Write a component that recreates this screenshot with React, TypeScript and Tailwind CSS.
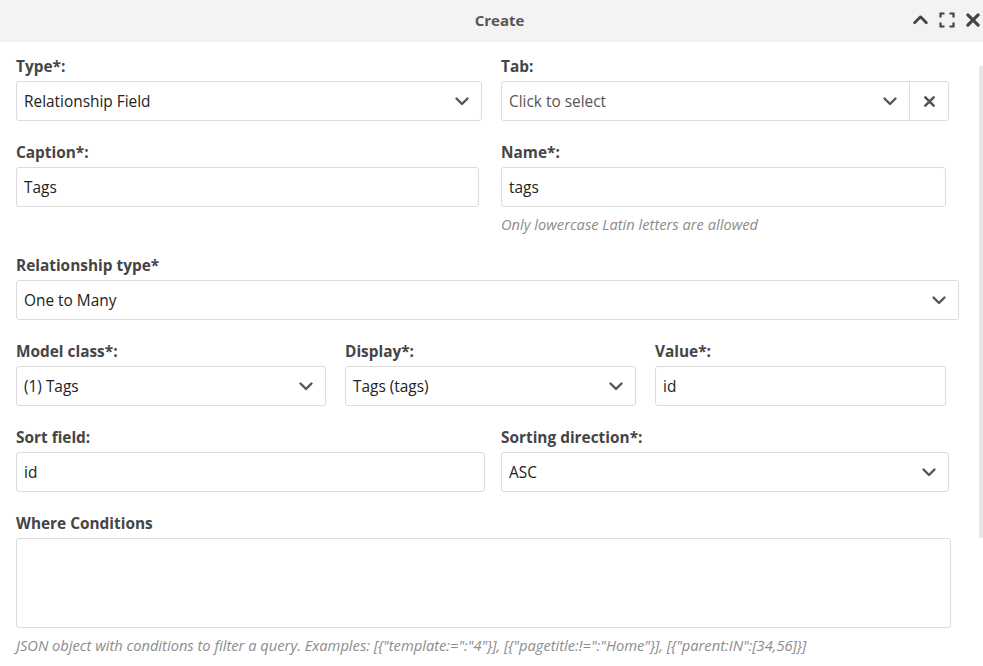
import React from "react";

const font = { fontFamily: '"Open Sans", "Noto Sans", sans-serif' };

function Chevron({ className = "" }: { className?: string }) {
  return (
    <svg viewBox="0 0 16 16" className={className} width="16" height="16" fill="none">
      <path d="M2.5 5.5 8 11l5.5-5.5" stroke="currentColor" strokeWidth="2.4" strokeLinecap="round" strokeLinejoin="round" />
    </svg>
  );
}

function Cross({ size = 14 }: { size?: number }) {
  return (
    <svg viewBox="0 0 14 14" width={size} height={size} fill="none">
      <path d="M2.5 2.5l9 9M11.5 2.5l-9 9" stroke="currentColor" strokeWidth="2.8" strokeLinecap="round" />
    </svg>
  );
}

function Label({ children }: { children: React.ReactNode }) {
  return <div className="text-[15.4px] font-bold leading-5 text-[#454545] mb-[4px]">{children}</div>;
}

function Input({ value, w }: { value: string; w: string }) {
  return (
    <div className={`${w} h-[40px] border border-[#dcdcdc] rounded-[3px] flex items-center px-[7px] pt-[2px] text-[15.4px] text-[#222]`}>
      {value}
    </div>
  );
}

function Select({ value, w, muted = false }: { value: string; w: string; muted?: boolean }) {
  return (
    <div className={`${w} h-[40px] border border-[#dcdcdc] rounded-[3px] flex items-center pl-[7px] pr-[11px] text-[15.4px]`}>
      <span className={`flex-1 pt-[2px] ${muted ? "text-[#555]" : "text-[#222]"}`}>{value}</span>
      <Chevron className="text-[#555]" />
    </div>
  );
}

export default function App() {
  return (
    <div className="w-[983px] h-[666px] bg-white overflow-hidden relative" style={font}>
      <div className="h-[42px] bg-[#f3f3f3] flex items-center justify-center pl-[16px] pb-[2px] relative">
        <span className="text-[15px] font-bold text-[#555]">Create</span>
        <div className="absolute right-[2px] top-[11px] flex items-center gap-[10px] text-[#444]">
          <svg viewBox="0 0 16 16" width="17" height="17" fill="none">
            <path d="M2.5 11 8 5.5l5.5 5.5" stroke="currentColor" strokeWidth="2.6" strokeLinecap="round" strokeLinejoin="round" />
          </svg>
          <svg viewBox="0 0 16 16" width="16" height="16" fill="none">
            <path d="M1.5 5.5v-4h4M10.5 1.5h4v4M14.5 10.5v4h-4M5.5 14.5h-4v-4" stroke="currentColor" strokeWidth="2.2" />
          </svg>
          <Cross size={16} />
        </div>
      </div>

      {/* scrollbar thumb */}
      <div className="absolute right-0 top-[66px] w-[4px] h-[472px] bg-[#e6e6e6]" />

      <div className="pl-[16px] pt-[15px]">
        <div className="flex gap-[19px]">
          <div>
            <Label>Type*:</Label>
            <Select value="Relationship Field" w="w-[466px]" />
          </div>
          <div>
            <Label>Tab:</Label>
            <div className="w-[448px] h-[40px] border border-[#dcdcdc] rounded-[3px] flex items-center text-[15.4px]">
              <span className="flex-1 pl-[7px] pt-[2px] text-[#555]">Click to select</span>
              <Chevron className="text-[#555] mr-[11px]" />
              <div className="w-[39px] h-full border-l border-[#dcdcdc] flex items-center justify-center text-[#555]">
                <Cross size={13} />
              </div>
            </div>
          </div>
        </div>

        <div className="flex gap-[22px] mt-[22px]">
          <div>
            <Label>Caption*:</Label>
            <Input value="Tags" w="w-[463px]" />
          </div>
          <div>
            <Label>Name*:</Label>
            <Input value="tags" w="w-[445px]" />
            <div className="text-[14.7px] italic text-[#8c8c8c] leading-5 mt-[7px]">Only lowercase Latin letters are allowed</div>
          </div>
        </div>

        <div className="mt-[22px]">
          <Label>Relationship type*</Label>
          <Select value="One to Many" w="w-[943px]" />
        </div>

        <div className="flex gap-[19px] mt-[22px]">
          <div>
            <Label>Model class*:</Label>
            <Select value="(1) Tags" w="w-[310px]" />
          </div>
          <div>
            <Label>Display*:</Label>
            <Select value="Tags (tags)" w="w-[291px]" />
          </div>
          <div>
            <Label>Value*:</Label>
            <Input value="id" w="w-[291px]" />
          </div>
        </div>

        <div className="flex gap-[16px] mt-[22px]">
          <div>
            <Label>Sort field:</Label>
            <Input value="id" w="w-[469px]" />
          </div>
          <div>
            <Label>Sorting direction*:</Label>
            <Select value="ASC" w="w-[448px]" />
          </div>
        </div>

        <div className="mt-[22px]">
          <Label>Where Conditions</Label>
          <div className="w-[935px] h-[90px] border border-[#dcdcdc] rounded-[3px]" />
          <div className="text-[14.7px] italic text-[#8c8c8c] leading-5 mt-[7px] whitespace-nowrap">
            {'JSON object with conditions to filter a query. Examples: [{"template:=":"4"}], [{"pagetitle:!=":"Home"}], [{"parent:IN":[34,56]}]'}
          </div>
        </div>
      </div>
    </div>
  );
}
